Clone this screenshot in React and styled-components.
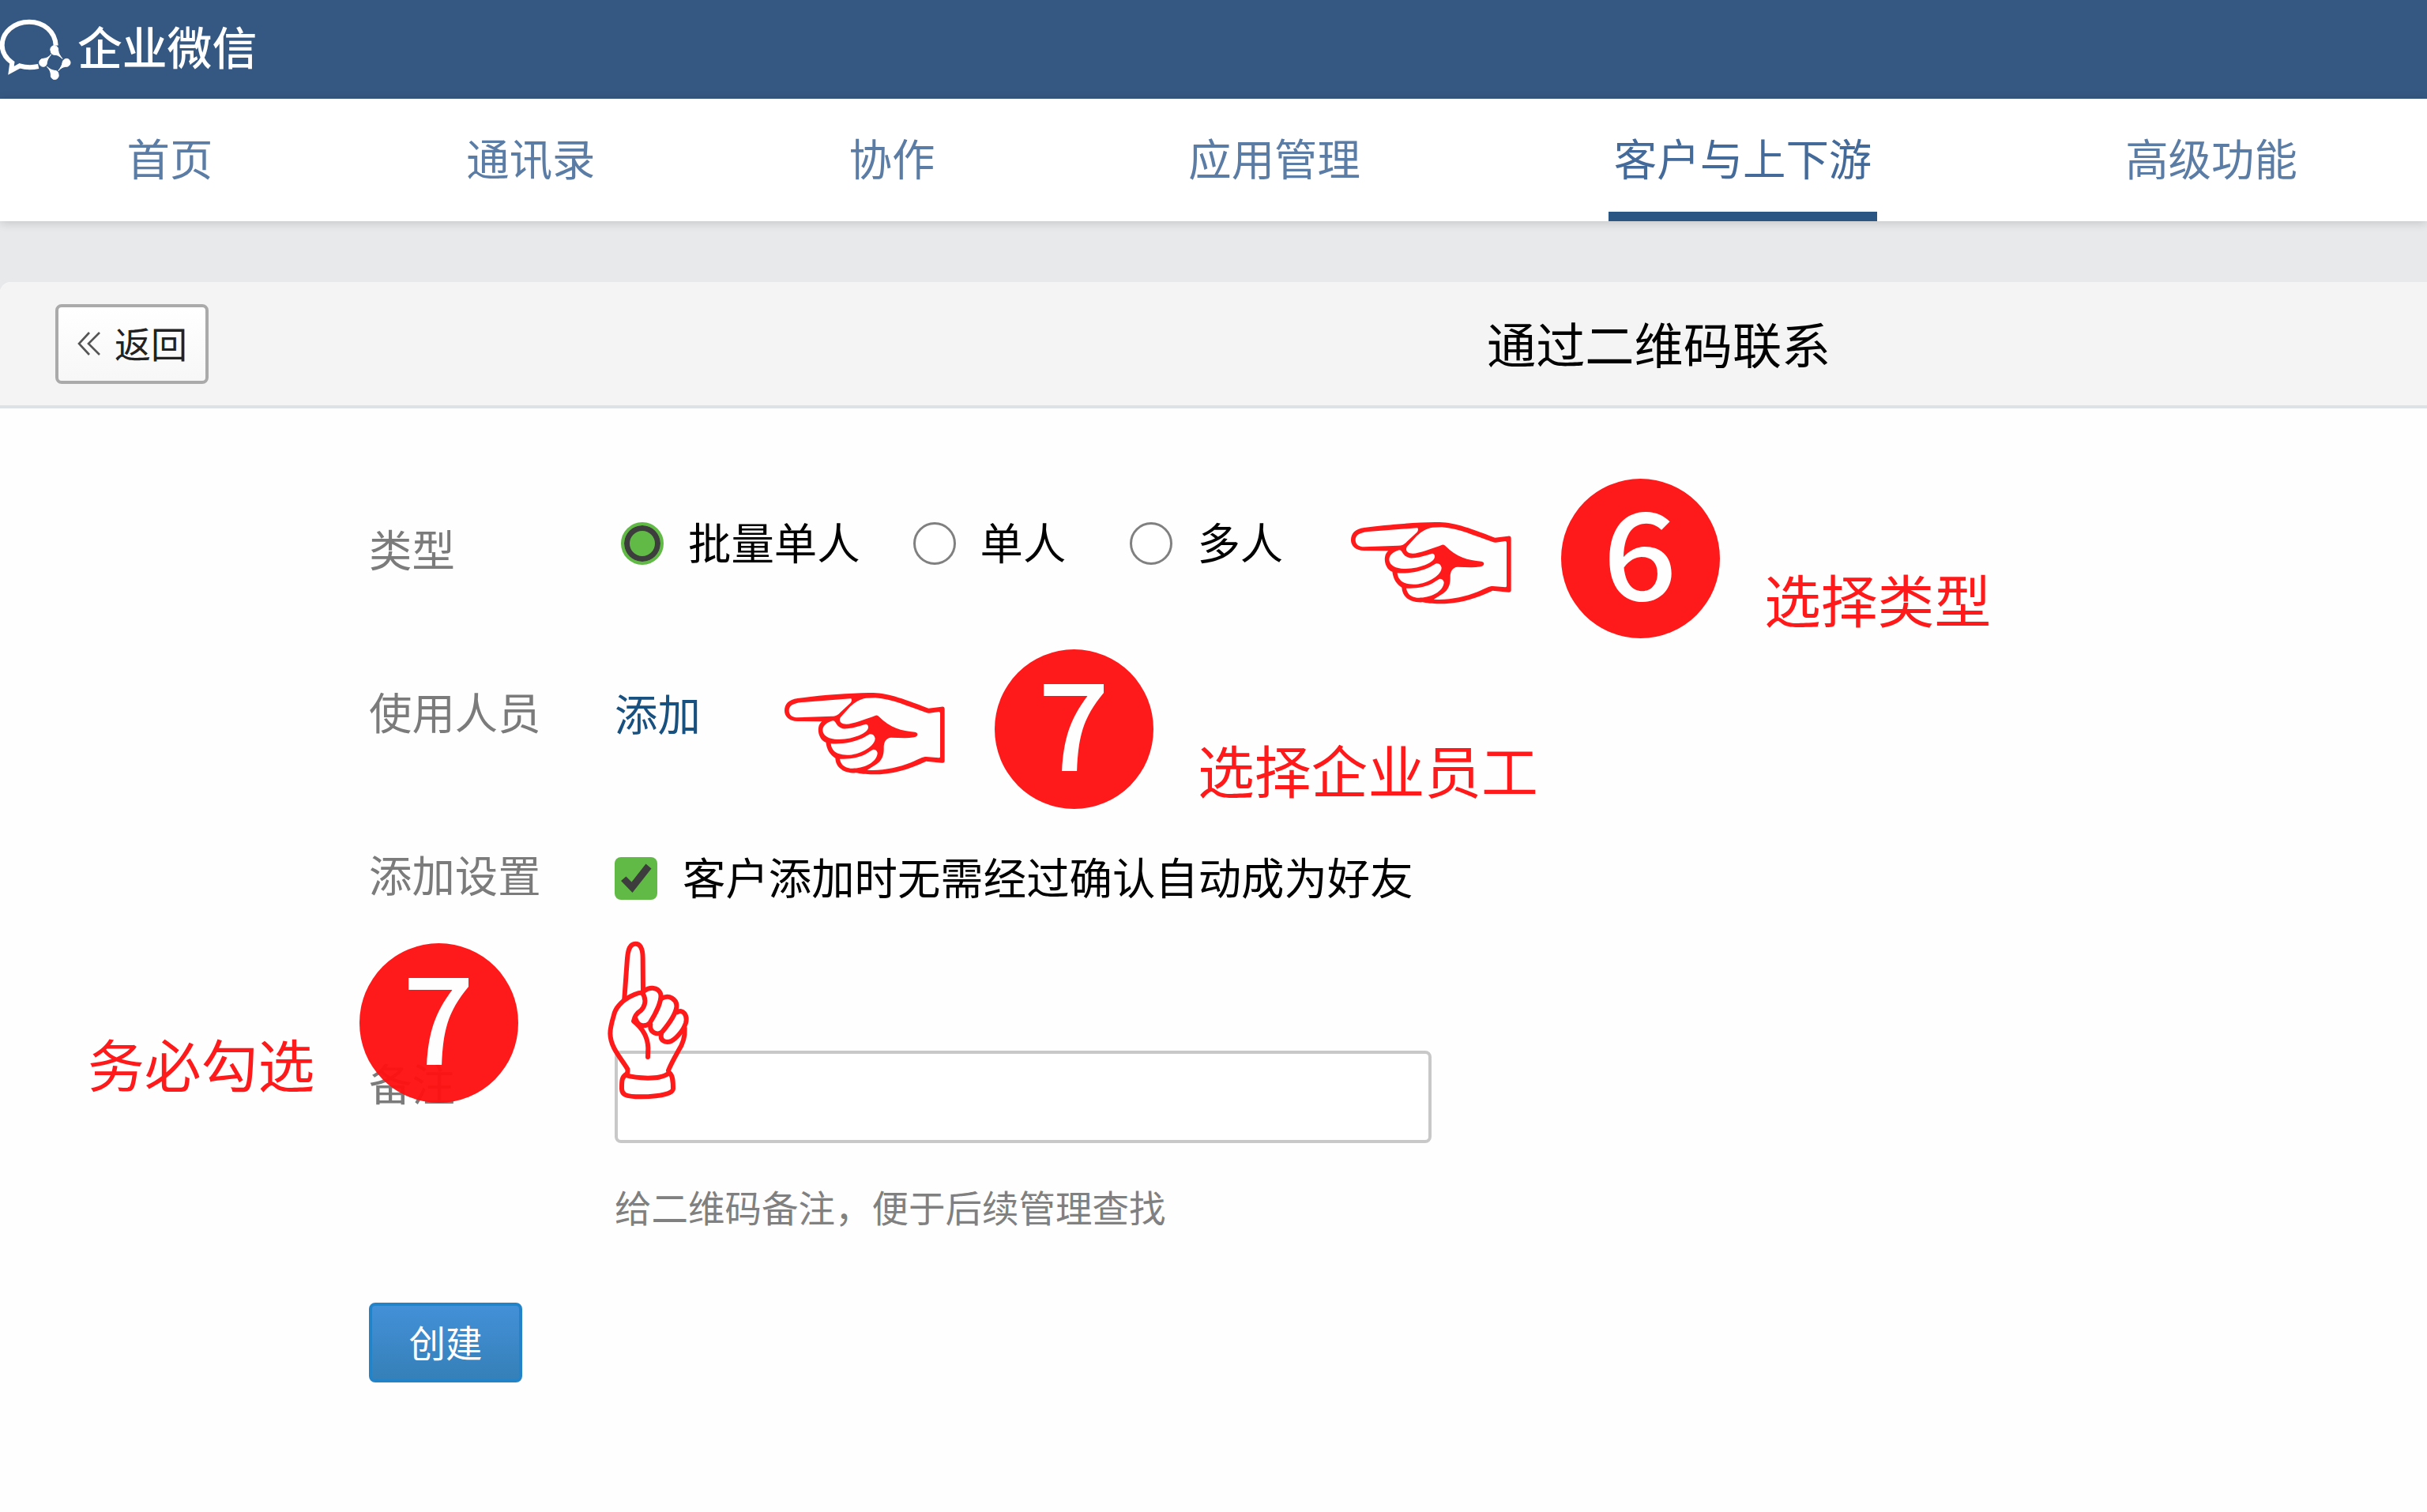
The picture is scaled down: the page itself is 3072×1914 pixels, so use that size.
import React from "react";
import styled, { createGlobalStyle } from "styled-components";

const GlobalStyle = createGlobalStyle`
  * {
    box-sizing: border-box;
  }
  body {
    margin: 0;
    background: #e8e9eb;
    font-family: "Noto Sans CJK SC", sans-serif;
    color: #000;
  }
`;

const navItems = [
  { text: "首页" },
  { text: "通讯录" },
  { text: "协作" },
  { text: "应用管理" },
  { text: "客户与上下游", active: true },
  { text: "高级功能" },
];

const types = [
  { text: "批量单人", checked: true, space: 67 },
  { text: "单人", space: 81 },
  { text: "多人", space: 0 },
];

function LogoIcon() {
  return (
    <svg width="94" height="84" viewBox="0 58 282 252">
      <path
        d="M212 174C210 120 165 84 111 84C54 84 8 123 8 173C8 200 22 222 46 239L42 269L75 251C98 258 122 258 146 253"
        fill="none"
        stroke="#fff"
        strokeWidth="18"
      />
      <g fill="#fff" stroke="#fff" strokeWidth="3" strokeLinejoin="round">
        <path d="M193 196A15 15 0 1 1 221 192C222 203 227 212 237 224C225 213 216 209 207 209C199 209 193 204 193 196Z" />
        <path d="M254 224A15 15 0 1 1 250 254C239 255 232 259 221 270C232 256 236 248 237 239C238 230 245 224 254 224Z" />
        <path d="M222 283A15 15 0 1 1 193 285C193 274 189 266 178 254C190 264 198 268 207 269C216 269 222 275 222 283Z" />
        <path d="M164 254A15 15 0 1 1 164 224C175 223 184 219 194 208C184 221 179 229 178 239C178 248 172 254 164 254Z" />
      </g>
    </svg>
  );
}

function HandLeft() {
  return (
    <HandBox>
      <svg width="207" height="107" viewBox="84 236 621 321">
        <path
          fill="#ff1111"
          fillRule="evenodd"
          d="M410 242C475 241 525 258 637 301L686 295Q698 293 698 304V500Q698 509 688 508L628 502C560 534 500 552 425 552C400 552 375 549 362 546C320 548 285 530 283 490C262 478 250 455 247 430C225 422 216 395 219 375C221 362 227 355 232 351L140 350C105 349 90 330 90 310C90 285 105 268 140 263C220 252 330 243 410 242Z
          M340 264L155 278C120 282 107 292 107 310C108 328 120 335 140 336L270 331C285 331 293 326 302 316L340 281Q348 272 343 264Z
          M400 262C375 266 358 277 340 294L303 335C295 347 302 360 325 361C350 360 395 343 436 328Q443 325 449 333C490 375 535 388 585 391Q595 393 595 400Q594 408 582 411C555 416 525 413 495 412C475 413 467 430 467 450C468 480 460 498 440 513L404 535C460 539 520 527 570 507C600 493 615 485 628 485L676 489Q681 489 681 484V320Q681 314 676 314L640 319Q634 320 628 317C560 295 500 265 435 261Q415 261 400 262Z
          M273 348Q280 348 284 355C295 375 310 380 328 378C355 375 375 368 398 361Q408 361 408 373C407 385 395 393 378 402C350 415 310 422 280 418C250 415 235 400 235 383C236 365 255 353 273 348Z
          M266 435C310 438 350 430 380 417C395 411 405 403 414 399Q430 398 434 415C433 435 415 448 395 460C370 473 340 482 310 477C285 473 268 460 266 435Z
          M300 493C340 495 375 488 400 474Q415 463 427 457Q440 457 443 470C443 487 430 502 412 513C385 528 360 530 340 529C315 525 303 512 300 493Z"
        />
      </svg>
    </HandBox>
  );
}

function HandUp() {
  return (
    <svg width="106" height="204" viewBox="84 390 318 612">
      <g
        fill="none"
        stroke="#ff1111"
        strokeWidth="18"
        strokeLinecap="round"
        strokeLinejoin="round"
      >
        <path d="M151 612L162 460C165 425 172 404 193 404C214 404 221 425 221 460L222 580" />
        <path d="M222 590C200 588 170 605 148 620C125 640 115 655 111 675C102 705 97 725 97 745C98 800 140 840 163 880Q164 890 162 896" />
        <path d="M218 590C235 610 232 640 213 658C195 670 190 680 186 698C220 725 240 760 241 800L240 834" />
        <path d="M224 584C250 566 277 570 287 590C298 615 268 672 248 704C235 718 205 722 195 692" />
        <path d="M292 612C320 595 352 615 349 645C345 675 310 720 295 738C280 752 245 745 250 710" />
        <path d="M352 664C372 650 392 675 384 705C375 735 345 765 330 773C310 782 285 775 291 747" />
        <path d="M380 725C382 760 370 790 355 812C342 835 328 860 318 885" />
        <path d="M160 898C140 910 141 925 141 955C142 975 150 985 215 985C290 984 335 972 336 955C336 925 335 905 322 894C300 912 270 913 240 914C205 913 180 910 160 904Z" />
      </g>
    </svg>
  );
}

function App() {
  return (
    <Page>
      <GlobalStyle />
      <TopBar>
        <LogoIcon />
        <Brand>企业微信</Brand>
      </TopBar>
      <Nav>
        {navItems.map((item) => (
          <NavItem key={item.text} $active={item.active}>
            {item.text}
          </NavItem>
        ))}
      </Nav>
      <Panel>
        <PanelHead>
          <BackButton>
            <svg width="29" height="32" viewBox="0 0 29 32">
              <path
                d="M15 2L2 16L15 30M28 2L14 16L28 30"
                fill="none"
                stroke="#555"
                strokeWidth="2.6"
              />
            </svg>
            <ButtonText>返回</ButtonText>
          </BackButton>
          <Title>通过二维码联系</Title>
        </PanelHead>
        <Form>
          <Row>
            <Label>类型</Label>
            <Controls $lift={16} $indent={8}>
              {types.map((type) => (
                <Option key={type.text} $space={type.space}>
                  <Radio $checked={type.checked} />
                  <ControlText>{type.text}</ControlText>
                </Option>
              ))}
            </Controls>
          </Row>
          <Row>
            <Label>使用人员</Label>
            <Controls $drop={6}>
              <AddLink>添加</AddLink>
            </Controls>
          </Row>
          <Row>
            <Label>添加设置</Label>
            <Controls $drop={7}>
              <CheckBox>
                <svg width="54" height="54" viewBox="0 0 54 54">
                  <path
                    d="M8 30L14.500 24.500L21.500 31.500L39.500 8.500L46.500 14.500L22.500 45Z"
                    fill="#3d3d3d"
                  />
                </svg>
              </CheckBox>
              <ControlText>客户添加时无需经过确认自动成为好友</ControlText>
            </Controls>
          </Row>
          <RemarkRow>
            <RemarkLabel>备注</RemarkLabel>
            <Remark>
              <Input />
              <Hint>给二维码备注，便于后续管理查找</Hint>
            </Remark>
          </RemarkRow>
          <CreateButton>
            <ButtonText>创建</ButtonText>
          </CreateButton>
        </Form>
      </Panel>

      <Note $x={1708} $y={606}>
        <HandLeft />
        <Badge>
          <Digit $stretch={1.07}>6</Digit>
        </Badge>
        <NoteText>选择类型</NoteText>
      </Note>
      <Note $x={991} $y={822}>
        <HandLeft />
        <Badge>
          <Digit>7</Digit>
        </Badge>
        <NoteText>选择企业员工</NoteText>
      </Note>
      <Note $x={111} $y={1194}>
        <NoteText $before>务必勾选</NoteText>
        <Badge $gap={57}>
          <Digit>7</Digit>
        </Badge>
      </Note>
      <Note $x={768} $y={1190}>
        <HandUp />
      </Note>
    </Page>
  );
}

const Page = styled.div`
  position: relative;
  width: 3072px;
  height: 1914px;
  overflow: hidden;
  display: flex;
  flex-direction: column;
`;

const TopBar = styled.header`
  height: 125px;
  flex: none;
  display: flex;
  align-items: center;
  gap: 4px;
  padding-bottom: 3px;
  background: #355882;
`;

const Brand = styled.div`
  color: #fff;
  font-size: 56.8px;
  font-weight: 500;
  line-height: 70px;
  padding-bottom: 9px;
`;

const Nav = styled.nav`
  position: relative;
  height: 155px;
  flex: none;
  display: flex;
  gap: 307px;
  padding-left: 153.5px;
  background: #fff;
  box-shadow: 0 2px 12px rgba(0, 0, 0, 0.16);
`;

const NavItem = styled.div`
  height: 155px;
  padding: 0 7px;
  font-size: 54.4px;
  line-height: 148px;
  white-space: nowrap;
  color: ${(props) => (props.$active ? "#446a9a" : "#5b7ca4")};
  border-bottom: 12px solid
    ${(props) => (props.$active ? "#2b5582" : "transparent")};
`;

const Panel = styled.main`
  flex: 1;
  margin-top: 77px;
  border-radius: 14px 0 0 0;
  background: #fefefe;
  overflow: hidden;
`;

const PanelHead = styled.div`
  height: 160px;
  display: flex;
  align-items: center;
  padding-left: 70px;
  background: #f4f4f4;
  border-bottom: 4px solid #dde2e6;
`;

const BackButton = styled.button`
  width: 194px;
  height: 101px;
  display: flex;
  align-items: center;
  gap: 18px;
  padding: 0 0 0 24px;
  border: 4px solid #aaa;
  border-radius: 8px;
  background: linear-gradient(#fff, #f7f7f7);
  font-family: inherit;
  font-size: 46px;
  line-height: 60px;
  color: #222;
`;

const ButtonText = styled.span`
  display: block;
  padding-bottom: 4px;
`;

const Title = styled.h1`
  margin: 0 0 0 1618px;
  padding-bottom: 3px;
  font-size: 62.2px;
  font-weight: 400;
  line-height: 80px;
`;

const Form = styled.div`
  padding: 76px 0 0 467px;
`;

const Row = styled.div`
  height: 206px;
  display: flex;
  align-items: center;
  font-size: 54.4px;
`;

const Label = styled.div`
  width: 311px;
  line-height: 80px;
  padding-bottom: 4px;
  color: #7b7b7b;
`;

const Controls = styled.div`
  display: flex;
  align-items: center;
  line-height: 80px;
  padding: ${(props) => props.$drop || 0}px 0 ${(props) => props.$lift || 0}px
    ${(props) => props.$indent || 0}px;
`;

const ControlText = styled.span`
  padding-bottom: 6px;
`;

const Option = styled.label`
  display: flex;
  align-items: center;
  gap: 31px;
  margin-right: ${(props) => props.$space}px;
`;

const Radio = styled.span`
  width: 54px;
  height: 54px;
  border-radius: 50%;
  border: ${(props) => (props.$checked ? "4px solid #62ba46" : "3px solid #808080")};
  background: ${(props) => (props.$checked ? "#62ba46" : "#fff")};
  box-shadow: ${(props) => (props.$checked ? "inset 0 0 0 7px #3d3d3d" : "none")};
`;

const AddLink = styled.a`
  padding-bottom: 6px;
  color: #18507f;
`;

const CheckBox = styled.span`
  width: 54px;
  height: 54px;
  margin-right: 32px;
  border-radius: 8px;
  background: #62ba46;
  svg {
    display: block;
  }
`;

const RemarkRow = styled.div`
  display: flex;
  align-items: flex-start;
  padding-top: 119px;
  font-size: 54.4px;
`;

const RemarkLabel = styled(Label)`
  padding: 0;
`;

const Remark = styled.div`
  display: flex;
  flex-direction: column;
`;

const Input = styled.input`
  width: 1034px;
  height: 117px;
  padding: 0 20px;
  border: 4px solid #c8c8c8;
  border-radius: 8px;
  background: #fff;
  font-size: 46px;
  outline: none;
`;

const Hint = styled.div`
  margin-top: 50px;
  font-size: 46.5px;
  line-height: 60px;
  color: #808080;
`;

const CreateButton = styled.button`
  display: block;
  width: 194px;
  height: 101px;
  margin-top: 92px;
  padding: 0;
  border: 4px solid #2383c9;
  border-radius: 8px;
  background: linear-gradient(#4390d8, #3580b8);
  font-family: inherit;
  font-size: 46.5px;
  line-height: 60px;
  color: #fff;
`;

/* red guide marks that lie over the form */
const Note = styled.div`
  position: absolute;
  left: ${(props) => props.$x}px;
  top: ${(props) => props.$y}px;
  display: flex;
  align-items: center;
  opacity: 0.96;
`;

const HandBox = styled.div`
  padding-top: 11px;
  svg {
    display: block;
  }
`;

const Badge = styled.div`
  width: 201px;
  height: 202px;
  margin-left: ${(props) => props.$gap || 61}px;
  border-radius: 50%;
  background: #ff1111;
  color: #fff;
  font-size: 154px;
  font-weight: 500;
  line-height: 174px;
  text-align: center;
`;

const Digit = styled.span`
  display: inline-block;
  padding-right: 2px;
  transform: scaleX(${(props) => props.$stretch || 1.04});
`;

const NoteText = styled.div`
  margin-left: ${(props) => (props.$before ? 0 : 56)}px;
  padding-top: 100px;
  font-size: 71.8px;
  line-height: 90px;
  white-space: nowrap;
  color: #ff1111;
`;

export default App;
